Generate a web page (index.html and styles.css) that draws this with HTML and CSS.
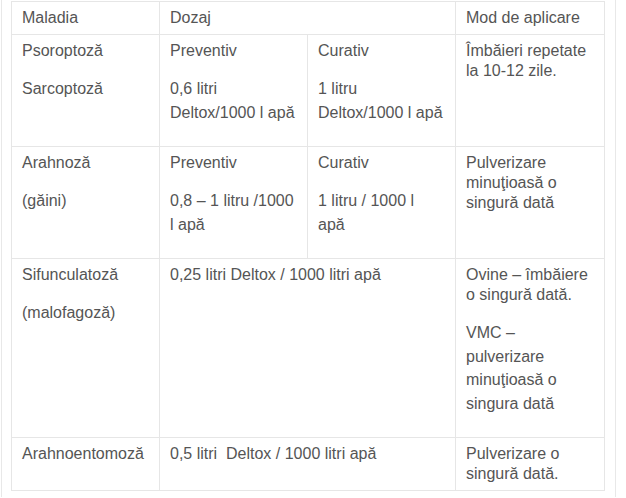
FILE: index.html
```html
<!DOCTYPE html>
<html lang="ro">
<head>
<meta charset="utf-8">
<link rel="stylesheet" href="styles.css">
</head>
<body>
<div class="frame">
<table class="dose">
<colgroup><col class="c"><col class="c"><col class="c"><col class="c last"></colgroup>
<tr class="head">
<td>Maladia</td>
<td colspan="2">Dozaj</td>
<td>Mod de aplicare</td>
</tr>
<tr>
<td>Psoroptoză<p>Sarcoptoză</p></td>
<td>Preventiv<p>0,6 litri<br>Deltox/1000 l apă</p></td>
<td>Curativ<p>1 litru<br>Deltox/1000 l apă</p></td>
<td>Îmbăieri repetate la 10-12 zile.</td>
</tr>
<tr>
<td>Arahnoză<p>(găini)</p></td>
<td>Preventiv<p>0,8 – 1 litru /1000 l apă</p></td>
<td>Curativ<p>1 litru / 1000 l apă</p></td>
<td>Pulverizare minuţioasă o singură dată</td>
</tr>
<tr>
<td>Sifunculatoză<p>(malofagoză)</p></td>
<td colspan="2">0,25 litri Deltox / 1000 litri apă</td>
<td>Ovine – îmbăiere o singură dată.<p>VMC – pulverizare minuţioasă o singura dată</p></td>
</tr>
<tr>
<td>Arahnoentomoză</td>
<td colspan="2">0,5 litri&nbsp; Deltox / 1000 litri apă</td>
<td>Pulverizare o singură dată.</td>
</tr>
</table>
</div>
</body>
</html>
```
FILE: styles.css
```css
html, body {
  margin: 0;
  padding: 0;
  background: #fff;
}
body {
  font-family: "Liberation Sans", Arial, sans-serif;
  font-size: 16px;
  color: #555;
}
.frame {
  margin-left: 1px;
  width: 615px;
  height: 497px;
  border-left: 1px solid #e8e8e8;
  border-right: 1px solid #e8e8e8;
  padding: 1px 0 0 9px;
  box-sizing: border-box;
}
.dose {
  border-collapse: collapse;
  table-layout: fixed;
  width: 594px;
}
.dose col.c { width: 148px; }
.dose col.last { width: 149px; }
.dose td {
  border: 1px solid #e6e6e6;
  padding: 6px 10px;
  vertical-align: top;
  line-height: 20px;
}
.dose p {
  margin: 16px 0;
  line-height: 23.5px;
}
```
